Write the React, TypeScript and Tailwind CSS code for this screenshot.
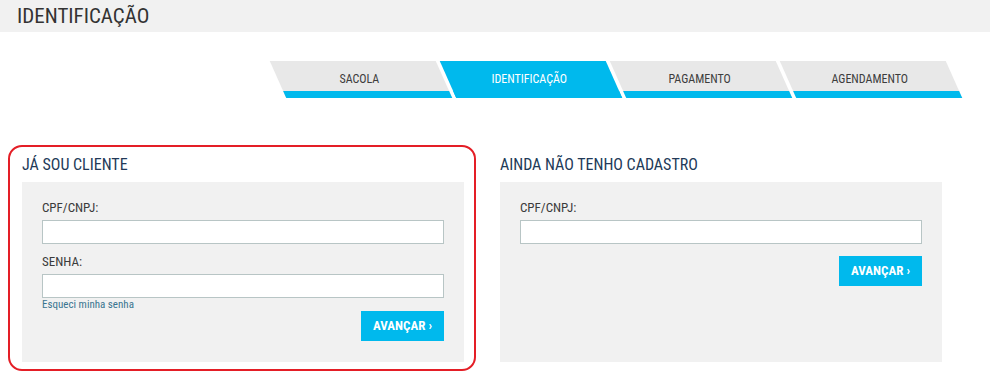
const font = { fontFamily: '"Roboto Condensed", "Liberation Sans Narrow", Roboto, sans-serif' };

const steps = [
  { label: "SACOLA", active: false },
  { label: "IDENTIFICAÇÃO", active: true },
  { label: "PAGAMENTO", active: false },
  { label: "AGENDAMENTO", active: false },
];

function Step({ label, active }: { label: string; active: boolean }) {
  return (
    <div
      className={
        active
          ? "w-[166px] h-[37px] skew-x-[24deg] bg-[#00b9ed] flex flex-col"
          : "w-[166px] h-[37px] skew-x-[24deg] bg-[#e8e8e8] flex flex-col"
      }
    >
      <div className="flex-1 flex items-center justify-center">
        <span
          className={
            active
              ? "-skew-x-[24deg] text-[12px] text-white pt-[6px]"
              : "-skew-x-[24deg] text-[12px] text-[#3d3d3d] pt-[6px]"
          }
        >
          {label}
        </span>
      </div>
      <div className="h-[7px] bg-[#00b9ed]" />
    </div>
  );
}

function Field({ label }: { label: string }) {
  return (
    <div>
      <div className="text-[13px] leading-[16px] text-[#3b3b3b] mb-[4px]">{label}</div>
      <div className="h-[24px] bg-white border border-[#b8c5c5]" />
    </div>
  );
}

function Button() {
  return (
    <button className="w-[83px] h-[30px] bg-[#00b9ed] text-white text-[13px] font-bold">
      AVANÇAR ›
    </button>
  );
}

export default function App() {
  return (
    <main className="w-[990px] h-[377px] bg-white overflow-hidden" style={font}>
      <div className="h-[32px] bg-[#f1f1f1] pl-[17px] pt-[4px]">
        <h1 className="text-[21px] leading-[24px] text-[#333]">IDENTIFICAÇÃO</h1>
      </div>

      <div className="flex gap-[4px] pl-[278px] mt-[29px]">
        {steps.map((s) => (
          <Step key={s.label} label={s.label} active={s.active} />
        ))}
      </div>

      <div className="flex mt-[47px] pl-[8px]">
        <section className="w-[468px] h-[226px] border-[2px] border-[#e41e26] rounded-[14px] pl-[12px] pr-[10px] pt-[8px]">
          <h2 className="text-[16px] leading-[20px] text-[#223a58] mb-[7px]">JÁ SOU CLIENTE</h2>
          <div className="h-[180px] bg-[#f1f1f1] px-[20px] pt-[18px]">
            <Field label="CPF/CNPJ:" />
            <div className="mt-[10px]">
              <Field label="SENHA:" />
            </div>
            <div className="text-[11px] leading-[12px] text-[#3a7590] mt-[1px]">Esqueci minha senha</div>
            <div className="flex justify-end">
              <Button />
            </div>
          </div>
        </section>

        <section className="ml-[24px] w-[442px] pt-[10px]">
          <h2 className="text-[16px] leading-[20px] text-[#223a58] mb-[7px]">AINDA NÃO TENHO CADASTRO</h2>
          <div className="h-[180px] bg-[#f1f1f1] px-[20px] pt-[18px]">
            <Field label="CPF/CNPJ:" />
            <div className="flex justify-end mt-[12px]">
              <Button />
            </div>
          </div>
        </section>
      </div>
    </main>
  );
}
